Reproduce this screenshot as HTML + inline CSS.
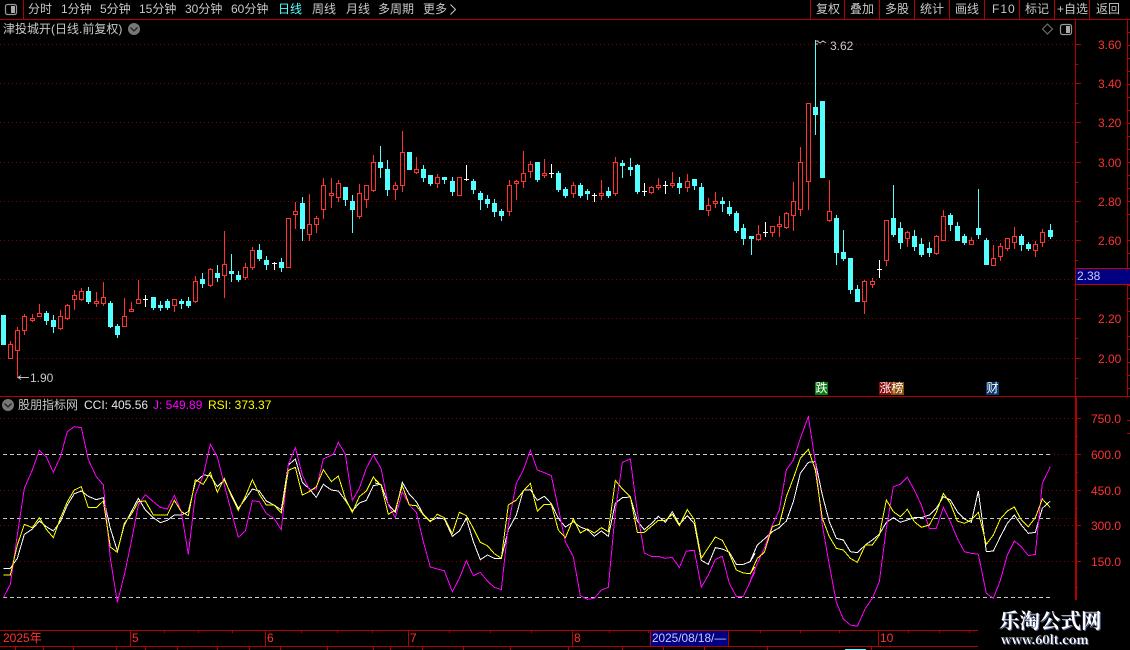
<!DOCTYPE html>
<html lang="zh"><head><meta charset="utf-8"><title>K线</title>
<style>
html,body{margin:0;padding:0;background:#000}
#p{position:relative;width:1130px;height:650px;overflow:hidden;background:#000;font-family:"Liberation Sans","WenQuanYi Zen Hei","Noto Sans CJK SC",sans-serif;font-size:12px;color:#c8c8c8}
#p span{position:absolute;white-space:nowrap;line-height:14px}
svg{position:absolute;left:0;top:0}
.tb{font-size:12px;top:2px}
.ax{color:#ff3232;font-size:12px;left:1098px}
.ax2{color:#ff3232;font-size:12px;left:1091px}
.m{color:#fff;font-size:12px;width:13px;height:13px;line-height:13px!important;text-align:center;top:382px}
.d{color:#ff3232;font-size:12px;top:631px}
.wm{font-family:"Noto Serif CJK SC","Liberation Serif",serif;font-weight:700;color:#fff;text-shadow:1px 1px 0 #5a6ea0}
</style></head><body><div id="p">
<svg id="s" width="1130" height="650" viewBox="0 0 1130 650" shape-rendering="crispEdges">
<g fill="none" stroke="#8c0000" stroke-dasharray="1 3">
<path d="M0 44.5H1075M0 83.5H1075M0 122.5H1075M0 162.5H1075M0 201.5H1075M0 240.5H1075M0 279.5H1075M0 318.5H1075M0 358.5H1075"/>
<path d="M0 418.5H1075M0 490.5H1075M0 525.5H1075M0 561.5H1075M1050 454.5H1075M1050 518.5H1075"/>
</g>
<g fill="none" stroke="#c8c8c8" stroke-dasharray="4 3"><path d="M3 454.5H1050M3 518.5H1050M3 597.5H1050"/></g>
<g id="c"></g>
<g transform="translate(0,395) scale(.33333)" fill="none" stroke-width="1" >
<polyline vector-effect="non-scaling-stroke" stroke="#ffffff" points="10,520 31,520 52,490 73,418 97,402 118,378 139,395 160,408 181,380 202,330 223,296 244,288 265,304 289,314 310,308 331,400 352,468 373,390 394,350 415,310 436,345 460,368 481,383 502,376 523,360 544,360 565,350 586,262 610,240 631,242 652,275 673,255 694,298 715,340 736,312 757,282 778,288 799,318 822,330 844,345 865,210 886,192 907,262 928,282 949,307 970,268 994,285 1015,288 1036,316 1057,348 1078,324 1099,316 1120,272 1140,268"/>
<polyline vector-effect="non-scaling-stroke" stroke="#ff00ff" points="10,608 31,568 52,420 73,280 97,225 118,166 139,186 160,232 181,186 202,110 223,95 244,98 265,194 289,245 310,270 331,490 352,622 373,540 394,440 415,330 436,299 460,320 481,337 502,342 523,301 544,350 565,478 586,300 610,240 631,148 652,186 673,270 694,350 715,427 736,408 757,317 778,320 799,356 822,370 844,404 865,208 886,158 907,240 928,284 949,282 970,192 1000,178 1015,142 1036,178 1057,316 1078,280 1099,220 1120,180 1140,215"/>
<polyline vector-effect="non-scaling-stroke" stroke="#ffff00" points="10,540 31,540 52,450 73,388 97,398 118,368 139,403 160,428 181,370 202,320 223,285 244,275 265,338 289,338 310,318 331,456 352,472 373,385 394,358 415,320 436,318 460,360 481,360 502,360 523,316 544,350 565,362 586,254 610,268 631,232 652,292 673,250 694,303 715,346 736,305 757,254 778,298 799,330 822,330 844,354 865,226 886,217 907,300 928,290 949,275 970,224 994,260 1015,243 1036,310 1057,352 1078,305 1099,288 1120,246 1140,268"/>
</g>
<g transform="translate(375,395) scale(.33333)" fill="none">
<polyline vector-effect="non-scaling-stroke" stroke="#ffffff" points="0,264 18,268 40,328 61,352 82,262 103,298 124,320 145,358 166,378 187,368 208,372 232,424 253,408 274,370 295,440 316,494 337,480 358,490 379,490 400,404 424,360 445,286 466,284 487,316 508,304 529,326 550,370 571,396 595,380 616,396 637,404 658,424 679,408 700,424 721,325 742,308 766,306 787,378 808,404 829,386 850,364 871,382 892,350 913,388 937,362 958,386 979,496 1000,508 1021,458 1042,462 1063,472 1084,508 1105,508 1126,500 1140,475"/>
<polyline vector-effect="non-scaling-stroke" stroke="#ff00ff" points="0,190 18,220 40,330 61,368 82,290 103,330 124,352 145,440 166,516 187,522 208,527 232,590 253,550 274,497 295,542 316,532 337,558 358,577 379,584 400,390 424,265 445,225 466,166 487,225 508,233 529,242 550,340 571,440 595,485 616,602 637,613 658,610 679,585 700,577 721,350 742,202 766,192 787,350 808,474 829,484 850,484 871,490 892,487 913,518 934,468 958,466 979,577 1000,540 1021,493 1042,484 1063,565 1084,604 1105,604 1140,530"/>
<polyline vector-effect="non-scaling-stroke" stroke="#ffff00" points="0,255 18,270 40,358 61,345 82,272 103,330 124,332 145,360 166,380 187,358 208,368 232,416 253,352 274,362 295,400 316,442 337,452 358,476 379,490 400,330 424,315 445,288 466,265 487,348 508,328 529,328 550,405 571,428 595,372 616,414 637,402 658,414 679,398 700,410 721,256 742,282 766,305 787,412 808,412 829,394 850,376 871,376 892,358 913,392 937,344 958,374 979,490 1000,458 1021,426 1042,436 1063,476 1084,525 1105,534 1126,536 1140,515"/>
</g>
<g transform="translate(750,395) scale(.33333)" fill="none">
<polyline vector-effect="non-scaling-stroke" stroke="#ffffff" points="0,500 22,450 43,432 67,410 88,398 109,378 130,320 151,235 175,202 196,200 217,300 238,380 259,430 280,435 301,470 322,473 346,450 367,435 388,418 409,382 430,368 451,382 472,375 493,368 514,368 538,360 559,340 580,305 601,315 622,350 643,372 664,382 685,288 709,470 730,468 751,425 772,385 793,360 814,390 835,415 856,412 877,340 901,318"/>
<polyline vector-effect="non-scaling-stroke" stroke="#ff00ff" points="0,560 22,505 43,460 67,390 88,345 109,225 130,195 151,130 175,65 196,200 217,390 238,510 259,622 280,672 301,690 322,694 346,640 367,610 388,560 409,400 430,275 451,268 472,247 493,285 514,330 538,400 559,400 580,337 601,380 622,430 643,470 664,475 685,478 709,595 730,610 751,556 772,480 793,438 814,455 835,482 856,478 877,265 901,215"/>
<polyline vector-effect="non-scaling-stroke" stroke="#ffff00" points="0,538 22,490 43,472 67,395 88,388 109,305 130,250 151,190 175,163 196,225 217,370 238,425 259,460 280,465 301,490 322,502 346,450 367,450 388,420 409,315 430,350 451,365 472,343 493,380 514,397 538,390 559,352 580,295 601,325 622,378 643,385 664,375 685,352 709,448 730,420 751,372 772,348 793,336 814,375 835,395 856,368 877,312 901,338"/>
</g>
<!-- frame lines -->
<g fill="#b40000">
<rect x="0" y="19" width="1130" height="1"/>
<rect x="23" y="0" width="1" height="19"/>
<rect x="810" y="0" width="1" height="19"/><rect x="844" y="0" width="1" height="19"/><rect x="879" y="0" width="1" height="19"/><rect x="914" y="0" width="1" height="19"/><rect x="949" y="0" width="1" height="19"/><rect x="984" y="0" width="1" height="19"/><rect x="1019" y="0" width="1" height="19"/><rect x="1054" y="0" width="1" height="19"/><rect x="1089" y="0" width="1" height="19"/>
<rect x="1075" y="19" width="1" height="378"/>
<rect x="0" y="396" width="1130" height="1"/>
<rect x="1075" y="396" width="2" height="204"/>
<rect x="1127" y="20" width="1" height="376"/>
<rect x="0" y="630" width="978" height="1"/><rect x="0" y="646" width="978" height="1"/>
<rect x="130" y="630" width="1" height="16"/><rect x="265" y="630" width="1" height="16"/><rect x="408" y="630" width="1" height="16"/><rect x="572" y="630" width="1" height="16"/><rect x="878" y="630" width="1" height="16"/>
</g>
<g fill="none" stroke="#b40000" shape-rendering="crispEdges">
<path d="M1075 44.5h6M1075 83.5h6M1075 122.5h6M1075 162.5h6M1075 201.5h6M1075 240.5h6M1075 279.5h6M1075 318.5h6M1075 358.5h6M1075 64.5h3M1075 103.5h3M1075 142.5h3M1075 182.5h3M1075 221.5h3M1075 260.5h3M1075 299.5h3M1075 338.5h3M1075 378.5h3"/>
<path d="M1075 418.5h6M1075 454.5h6M1075 490.5h6M1075 525.5h6M1075 561.5h6M1075 436.5h3M1075 472.5h3M1075 508.5h3M1075 543.5h3M1075 587.5h3"/>
<path d="M1127 32.5h3M1127 45.5h3M1127 58.5h3M1127 71.5h3M1127 84.5h3M1127 97.5h3M1127 110.5h3M1127 123.5h3M1127 136.5h3M1127 149.5h3M1127 162.5h3M1127 175.5h3M1127 188.5h3M1127 201.5h3M1127 214.5h3M1127 240.5h3M1127 253.5h3M1127 285.5h3M1127 298.5h3M1127 311.5h3M1127 336.5h3M1127 349.5h3M1127 362.5h3M1127 375.5h3M1127 388.5h3M1127 420.5h3M1127 433.5h3"/>
<path d="M164.5 631v2M198.5 631v2M232.5 631v2M301.5 631v2M337.5 631v2M372.5 631v2M449.5 631v2M490.5 631v2M531.5 631v2M609.5 631v2M648.5 631v2M760.5 631v2M800.5 631v2M839.5 631v2M908.5 631v2M939.5 631v2M969.5 631v2"/>
<path d="M15.5 647v3M43.5 647v3M73.5 647v3M116.5 647v3M145.5 647v3M177.5 647v3M217.5 647v3M249.5 647v3M280.5 647v3M327.5 647v3M373.5 647v3M390.5 647v3M422.5 647v3M463.5 647v3M510.5 647v3M568.5 647v3M622.5 647v3M663.5 647v3M704.5 647v3M767.5 647v3M871.5 647v3"/>
</g>
<rect x="845" y="649" width="21" height="1" fill="#54ffff"/>
<!-- boxes -->
<rect x="1076" y="269" width="54" height="15" fill="#000080"/>
<path d="M1075 268.5H1130M1075 284.5H1130" stroke="#c80000" fill="none"/>
<rect x="651" y="631" width="77" height="15" fill="#000080"/>
<path d="M650.5 631V646M728.5 631V646" stroke="#b40000" fill="none"/>
<rect x="815" y="382" width="13" height="13" fill="#0b7d12"/>
<rect x="879" y="382" width="12" height="13" fill="#8a0a0a"/>
<rect x="891" y="382" width="13" height="13" fill="#8f4a05"/>
<rect x="986" y="382" width="13" height="13" fill="#0a3a70"/>
<!-- icons -->
<g shape-rendering="auto" fill="none">
<rect x="5.5" y="4.5" width="11" height="10" rx="2" stroke="#999" stroke-width="1.2"/><rect x="11" y="6" width="4" height="7" fill="#aaa"/>
<rect x="1060.5" y="24.5" width="11" height="10" rx="2" stroke="#999" stroke-width="1.2"/><rect x="1066" y="26" width="4" height="7" fill="#aaa"/>
<path d="M1047.5 24l5 5-5 5-5-5z" stroke="#777"/>
<circle cx="134" cy="29" r="6" fill="#777"/><path d="M130.5 27.5l3.500 3.500 3.500-3.500" stroke="#222" stroke-width="1.300"/>
<circle cx="8" cy="405" r="6" fill="#777"/><path d="M4.500 403.500l3.500 3.500 3.500-3.500" stroke="#222" stroke-width="1.300"/>
<path d="M450.500 4.500l5 5-5 5" stroke="#c8c8c8"/>
<path d="M815.500 42.500V41h3M816 44h2M817 41l3 2 3-2 3 2" stroke="#c0c0c0"/>
<path d="M18 377.500H29M18 377.500l3-2M18 377.500l3 2" stroke="#c0c0c0"/>
</g>
</svg>

<span class="tb" style="left:28px">分时</span>
<span class="tb" style="left:61px">1分钟</span>
<span class="tb" style="left:100px">5分钟</span>
<span class="tb" style="left:139px">15分钟</span>
<span class="tb" style="left:185px">30分钟</span>
<span class="tb" style="left:231px">60分钟</span>
<span class="tb" style="left:278px;color:#54ffff">日线</span>
<span class="tb" style="left:312px">周线</span>
<span class="tb" style="left:346px">月线</span>
<span class="tb" style="left:378px">多周期</span>
<span class="tb" style="left:423px">更多</span>
<span class="tb" style="left:816px">复权</span>
<span class="tb" style="left:850px">叠加</span>
<span class="tb" style="left:885px">多股</span>
<span class="tb" style="left:920px">统计</span>
<span class="tb" style="left:955px">画线</span>
<span class="tb" style="left:992px;letter-spacing:1px">F10</span>
<span class="tb" style="left:1025px">标记</span>
<span class="tb" style="left:1057px">+自选</span>
<span class="tb" style="left:1096px">返回</span>
<span style="left:3px;top:22px">津投城开(日线.前复权)</span>

<span style="left:830px;top:39px">3.62</span>
<span style="left:30px;top:371px">1.90</span>

<span class="ax" style="top:38px">3.60</span>
<span class="ax" style="top:77px">3.40</span>
<span class="ax" style="top:116px">3.20</span>
<span class="ax" style="top:156px">3.00</span>
<span class="ax" style="top:195px">2.80</span>
<span class="ax" style="top:234px">2.60</span>
<span class="ax" style="top:312px">2.20</span>
<span class="ax" style="top:352px">2.00</span>
<span style="left:1077px;top:269px;color:#c8c8ff;font-size:12px">2.38</span>

<span class="m" style="left:815px">跌</span><span class="m" style="left:879px">涨</span><span class="m" style="left:891px">榜</span><span class="m" style="left:986px">财</span>

<span style="left:18px;top:398px">股朋指标网</span>
<span style="left:84px;top:398px;color:#e8e8e8">CCI: 405.56</span>
<span style="left:153px;top:398px;color:#ff00ff">J: 549.89</span>
<span style="left:208px;top:398px;color:#ffff00">RSI: 373.37</span>

<span class="ax2" style="top:412px">750.0</span>
<span class="ax2" style="top:448px">600.0</span>
<span class="ax2" style="top:484px">450.0</span>
<span class="ax2" style="top:519px">300.0</span>
<span class="ax2" style="top:555px">150.0</span>

<span class="d" style="left:3px">2025年</span>
<span class="d" style="left:132px">5</span>
<span class="d" style="left:267px">6</span>
<span class="d" style="left:410px">7</span>
<span class="d" style="left:574px">8</span>
<span class="d" style="left:880px">10</span>
<span class="d" style="left:652px;color:#c8c8ff;font-size:11.800px">2025/08/18/—</span>

<span class="wm" style="left:999px;top:607px;font-size:20.500px;line-height:24px">乐淘公式网</span>
<span class="wm" style="left:1001px;top:633px;font-size:12px">www.60lt.com</span>

<script>
var R='#ff3232',C='#54ffff',W='#ffffff';
var d=[[3,315,344,315,344,C],[10,344,358,341,358,R],[17,330,350,327,377,R],[24,316,330,314,334,R],[32,318,320,314,321,R],[39,313,316,304,316,R],[46,313,320,311,324,C],[53,320,326,315,332,C],[60,316,328,310,329,R],[67,305,318,304,319,R],[74,295,299,290,309,R],[81,291,299,288,300,R],[88,291,301,287,303,C],[96,301,303,292,306,R],[103,297,303,282,305,R],[110,303,326,301,327,C],[117,326,334,324,337,C],[124,316,326,298,326,R],[131,309,311,302,311,R],[138,299,303,280,303,R],[145,299,299,295,306,W],[153,297,307,297,309,C],[160,305,307,301,310,C],[167,301,307,299,309,C],[174,299,305,299,311,R],[181,301,303,299,308,C],[188,301,305,297,307,C],[195,281,301,276,302,R],[202,279,283,273,287,C],[210,269,285,268,286,R],[217,273,277,265,281,C],[224,264,275,231,297,R],[231,271,273,254,281,C],[238,275,279,271,281,C],[245,267,277,263,279,R],[252,250,267,247,269,R],[259,250,258,244,260,C],[266,260,264,256,269,C],[274,263,263,262,269,W],[281,262,267,258,271,C],[288,218,267,218,267,R],[295,211,214,202,228,R],[302,203,228,197,240,C],[309,224,234,194,240,R],[316,218,224,216,232,R],[323,185,209,178,218,R],[331,193,195,178,207,R],[338,183,197,180,201,R],[345,187,199,187,205,C],[352,201,209,195,232,C],[359,193,216,184,218,R],[366,185,199,185,207,R],[373,162,190,155,191,R],[380,162,167,146,177,C],[387,169,189,160,195,C],[395,185,189,182,199,R],[402,152,185,131,191,R],[409,152,169,152,169,C],[416,169,172,157,173,R],[423,169,177,165,181,C],[430,175,183,175,185,C],[437,177,183,174,187,R],[444,177,179,177,183,C],[452,181,191,177,195,C],[459,177,195,177,195,R],[466,179,179,165,180,W],[473,181,189,179,193,C],[480,193,199,191,209,C],[487,199,203,195,207,C],[494,203,211,199,216,C],[501,211,215,209,220,C],[509,185,211,180,215,R],[516,181,183,180,199,R],[523,173,181,151,187,R],[530,164,171,161,177,R],[537,162,179,162,181,C],[544,173,175,159,177,R],[551,173,173,164,177,W],[558,173,189,171,191,C],[565,189,195,187,197,C],[573,185,193,182,197,R],[580,185,195,183,197,C],[587,191,193,189,199,C],[594,195,195,193,201,W],[601,193,195,180,199,R],[608,191,195,187,197,C],[615,162,193,157,195,R],[622,163,165,160,177,C],[630,167,169,158,175,C],[637,165,191,164,193,C],[644,191,191,183,195,W],[651,187,192,186,193,R],[658,185,187,178,189,R],[665,185,185,181,193,W],[672,183,185,172,187,R],[679,183,187,177,193,C],[687,181,187,174,191,R],[694,179,185,179,189,C],[701,187,209,183,209,C],[708,205,210,198,215,R],[715,201,203,192,207,R],[722,201,203,197,211,C],[729,207,213,201,215,C],[736,213,230,211,232,C],[743,228,238,224,244,C],[751,236,238,236,254,C],[758,234,239,225,240,R],[765,232,232,222,236,W],[772,226,232,226,236,R],[779,224,226,216,236,R],[786,213,227,212,228,R],[793,201,215,182,230,R],[800,162,209,147,215,R],[808,103,181,103,209,R],[815,107,114,40,134,C],[822,101,177,101,177,C],[829,211,220,180,221,R],[836,218,252,215,264,C],[843,252,258,230,260,C],[850,258,289,258,293,C],[857,289,301,285,301,C],[864,281,301,280,313,R],[872,281,284,278,287,R],[879,269,269,260,277,W],[886,220,260,220,265,R],[893,218,234,185,236,C],[900,228,242,222,248,C],[907,232,238,231,246,R],[914,236,246,230,250,C],[921,244,254,238,256,C],[929,248,252,242,256,C],[936,236,253,235,254,R],[943,216,240,210,240,R],[950,215,224,213,230,C],[957,226,240,222,240,C],[964,236,242,234,244,C],[971,240,244,237,244,R],[978,228,234,189,238,C],[986,240,264,238,264,C],[993,258,265,245,265,R],[1000,246,256,243,260,R],[1007,238,248,238,250,R],[1014,236,242,227,248,R],[1021,236,244,234,250,C],[1028,244,248,242,250,C],[1035,244,250,241,256,R],[1042,232,242,229,246,R],[1050,230,236,224,238,C]];
var h='';
d.forEach(function(a){var x=a[0],t=a[1],b=a[2],hi=a[3],lo=a[4],c=a[5];
 h+='<rect x="'+x+'" y="'+hi+'" width="1" height="'+(lo-hi+1)+'" fill="'+c+'"/>';
 if(c===R){h+='<rect x="'+(x-1.5)+'" y="'+(t+.5)+'" width="4" height="'+(b-t)+'" fill="#000" stroke="'+c+'"/>';}
 else if(c===W||t===b){h+='<rect x="'+(x-2)+'" y="'+t+'" width="5" height="1" fill="'+c+'"/>';}
 else{h+='<rect x="'+(x-2)+'" y="'+t+'" width="5" height="'+(b-t+1)+'" fill="'+c+'"/>';}
});
document.getElementById('c').innerHTML=h;
</script>
</div></body></html>
